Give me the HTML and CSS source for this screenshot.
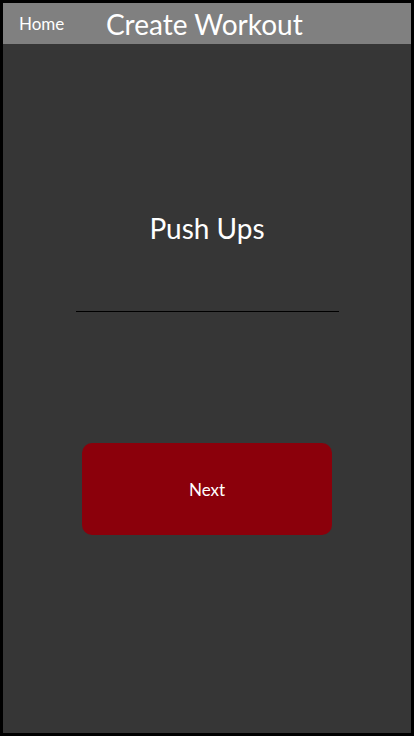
FILE: index.html
```html
<!DOCTYPE html>
<html>
<head>
<meta charset="utf-8">
<link rel="stylesheet" href="styles.css">
</head>
<body>
<div class="screen">
  <header class="topbar">
    <span class="home">Home</span>
    <h1 class="title">Create Workout</h1>
  </header>
  <main class="content">
    <h2 class="exercise">Push Ups</h2>
    <div class="divider"></div>
    <button class="next">Next</button>
  </main>
</div>
</body>
</html>
```
FILE: styles.css
```css
html, body {
  margin: 0;
  padding: 0;
  background: #000;
}
.screen {
  box-sizing: border-box;
  width: 414px;
  height: 736px;
  border: 3px solid #000;
  background: #363636;
  font-family: Lato, "Open Sans", sans-serif;
  color: #fff;
  display: flex;
  flex-direction: column;
}
.topbar {
  height: 41px;
  background: #808080;
  display: flex;
  align-items: center;
  padding-left: 16px;
}
.home {
  font-size: 17px;
  width: 87px;
}
.title {
  margin: 0;
  font-weight: normal;
  font-size: 28px;
  line-height: 1;
}
.content {
  display: flex;
  flex-direction: column;
  align-items: center;
}
.exercise {
  margin: 167px 0 0 0;
  font-weight: normal;
  font-size: 28px;
  line-height: 34px;
}
.divider {
  margin-top: 66px;
  width: 263px;
  height: 1px;
  background: #000;
}
.next {
  margin-top: 131px;
  width: 250px;
  height: 92px;
  border: none;
  border-radius: 10px;
  background: #8b000b;
  color: #fff;
  font-family: Lato, "Open Sans", sans-serif;
  font-size: 17px;
}
```
